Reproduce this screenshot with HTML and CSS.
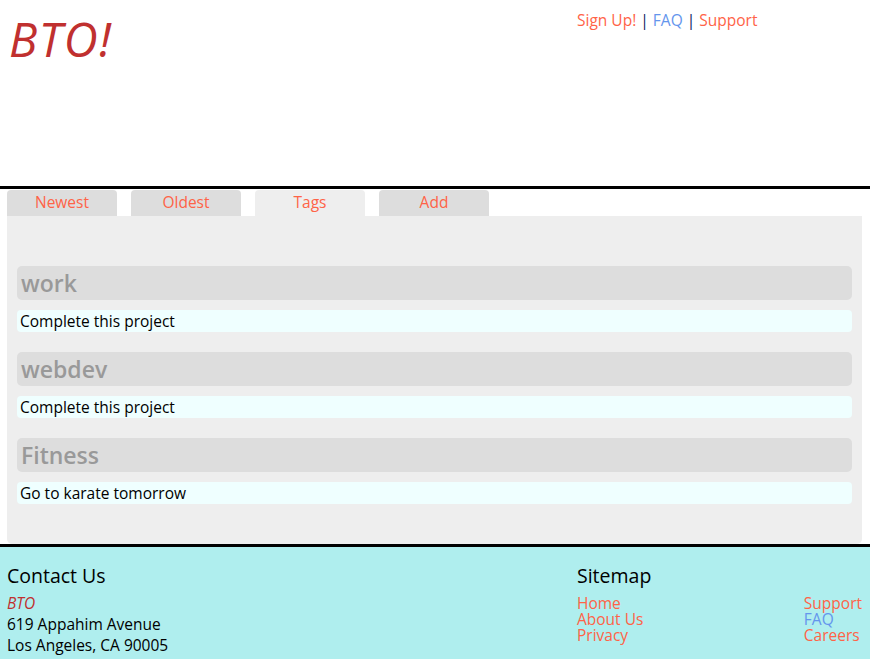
FILE: index.html
```html
<!DOCTYPE html>
<html>
<head>
<meta charset="utf-8">
<link rel="stylesheet" href="styles.css">
</head>
<body>
<header class="site-header">
  <div class="logo">BTO!</div>
  <nav class="top-nav">
    <a class="link-red" href="#">Sign Up!</a> <span class="sep">|</span> <a class="link-blue" href="#">FAQ</a> <span class="sep">|</span> <a class="link-red" href="#">Support</a>
  </nav>
</header>
<main class="main">
  <div class="tabs">
    <div class="tab">Newest</div>
    <div class="tab">Oldest</div>
    <div class="tab active">Tags</div>
    <div class="tab">Add</div>
  </div>
  <div class="panel">
    <section class="tag-group">
      <h2 class="tag-title">work</h2>
      <div class="tag-item">Complete this project</div>
    </section>
    <section class="tag-group">
      <h2 class="tag-title">webdev</h2>
      <div class="tag-item">Complete this project</div>
    </section>
    <section class="tag-group">
      <h2 class="tag-title">Fitness</h2>
      <div class="tag-item">Go to karate tomorrow</div>
    </section>
  </div>
</main>
<footer class="site-footer">
  <div class="contact">
    <h3 class="foot-title">Contact Us</h3>
    <div class="brand">BTO</div>
    <div class="addr">619 Appahim Avenue</div>
    <div class="addr">Los Angeles, CA 90005</div>
  </div>
  <div class="sitemap">
    <h3 class="foot-title">Sitemap</h3>
    <div class="sitemap-cols">
      <div class="sm-col">
        <a class="link-red" href="#">Home</a>
        <a class="link-red" href="#">About Us</a>
        <a class="link-red" href="#">Privacy</a>
      </div>
      <div class="sm-col">
        <a class="link-red" href="#">Support</a>
        <a class="link-blue" href="#">FAQ</a>
        <a class="link-red" href="#">Careers</a>
      </div>
    </div>
  </div>
</footer>
</body>
</html>
```

FILE: styles.css
```css
* { box-sizing: border-box; }
html, body { margin: 0; padding: 0; }
body {
  font-family: "Open Sans", "DejaVu Sans", sans-serif;
  font-size: 15.5px;
  color: #000;
  background: #fff;
  width: 870px;
}
a { text-decoration: none; }
.link-red { color: #ff6347; }
.link-blue { color: #6495ed; }

.site-header {
  display: grid;
  grid-template-columns: 577px 1fr;
  height: 189px;
  border-bottom: 3px solid #000;
}
.logo {
  font-style: italic;
  font-size: 47px;
  color: #c0302f;
  padding: 7px 0 0 9px;
  line-height: 64px;
  letter-spacing: 1.5px;
}
.top-nav {
  padding-top: 9px;
  line-height: 22px;
}
.sep { color: #0a1a5c; }

.main {
  padding: 1px 8px 0 7px;
}
.tabs {
  display: flex;
  gap: 14px;
}
.tab {
  width: 110px;
  height: 26px;
  background: #dddddd;
  color: #ff6347;
  text-align: center;
  line-height: 24px;
  border-radius: 4px 4px 0 0;
}
.tab.active { background: #eeeeee; }
.panel {
  background: #eeeeee;
  padding: 50px 10px 20px 10px;
  border-radius: 0 0 5px 5px;
  height: 328px;
}
.tag-group { margin-bottom: 20px; }
.tag-title {
  margin: 0 0 10px 0;
  height: 34px;
  background: #dddddd;
  border-radius: 5px;
  color: #999999;
  font-size: 23px;
  font-weight: 600;
  line-height: 34px;
  padding-left: 4px;
}
.tag-item {
  height: 22px;
  background: #efffff;
  border-radius: 4px;
  line-height: 22px;
  padding-left: 3px;
}

.site-footer {
  border-top: 3px solid #000;
  background: #afeeee;
  height: 115px;
  display: grid;
  grid-template-columns: 570px 1fr;
  padding: 16px 8px 0 7px;
}
.foot-title {
  margin: 0 0 4px 0;
  font-size: 19.5px;
  font-weight: normal;
  line-height: 26px;
}
.brand {
  font-style: italic;
  color: #c0302f;
  line-height: 21px;
}
.addr { line-height: 21px; }
.sitemap-cols {
  display: flex;
  justify-content: space-between;
  padding-top: 2px;
}
.sm-col {
  display: flex;
  flex-direction: column;
  white-space: nowrap;
}
.sm-col a { line-height: 16px; }
```
